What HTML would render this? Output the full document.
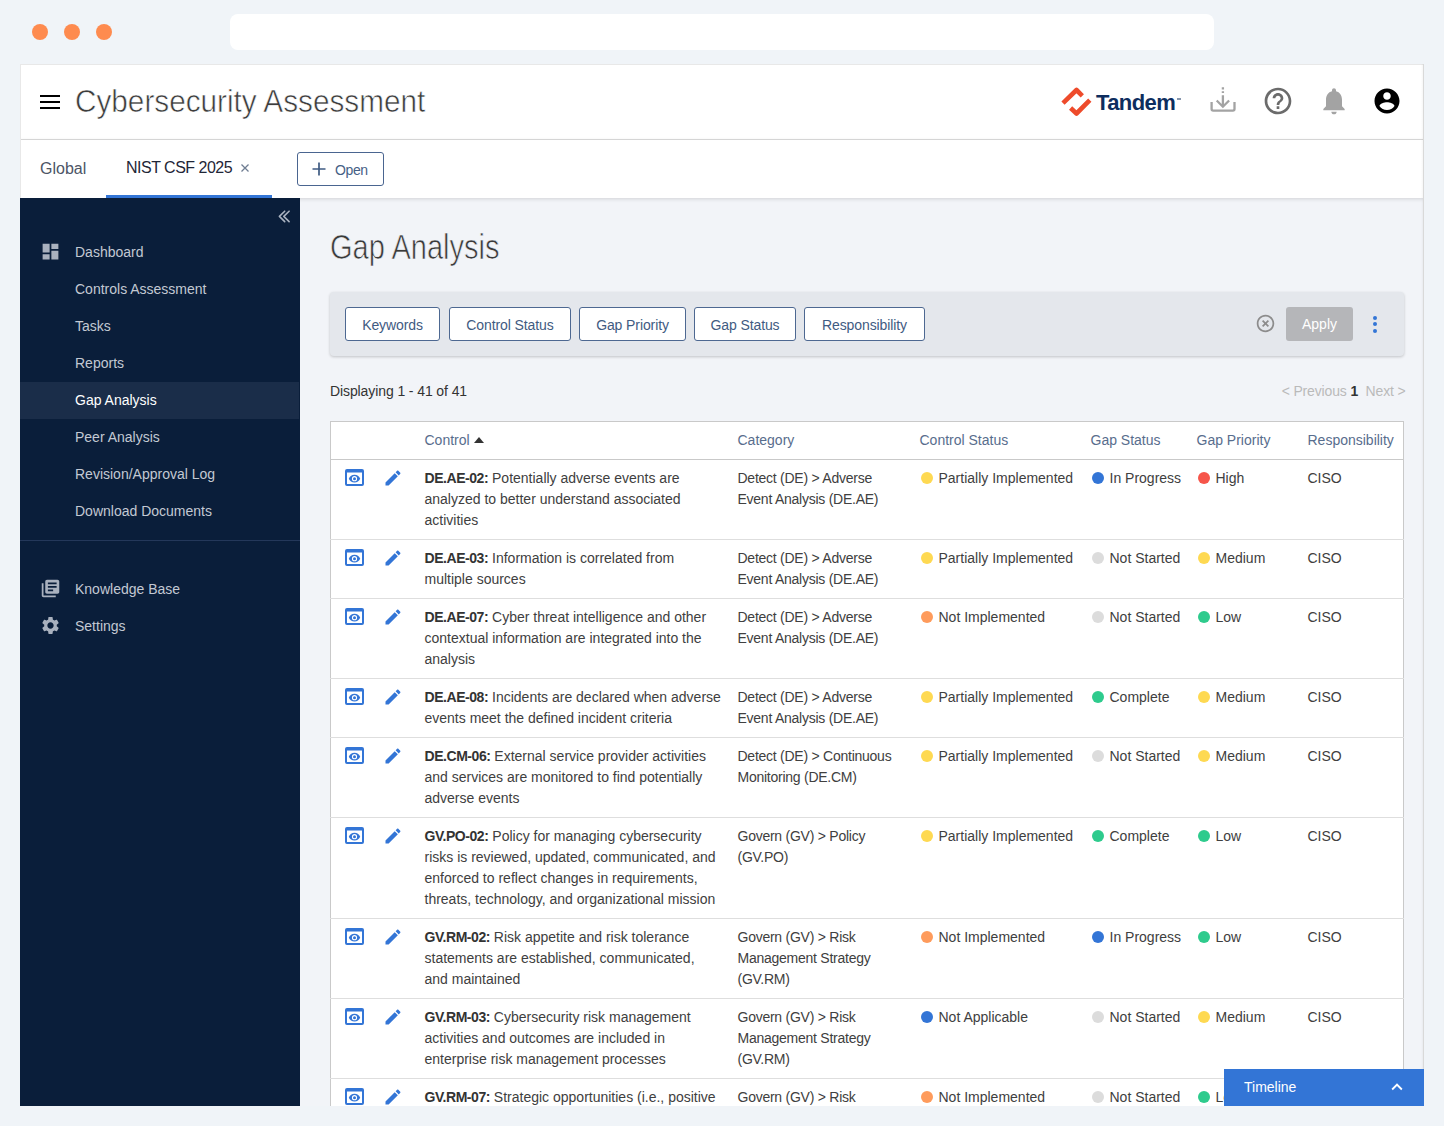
<!DOCTYPE html>
<html><head><meta charset="utf-8">
<style>
*{box-sizing:border-box;margin:0;padding:0}
html,body{width:1444px;height:1126px;overflow:hidden;background:#f0f4f8;font-family:"Liberation Sans",sans-serif;color:#333}
.abs{position:absolute}
.dot3{position:absolute;top:24px;width:16px;height:16px;border-radius:50%;background:#fe8b4f}
#url{position:absolute;left:230px;top:14px;width:984px;height:36px;border-radius:8px;background:#fff}
#win{position:absolute;left:20px;top:64px;width:1404px;height:1042px;overflow:hidden;background:#f2f4f8;}
#hdr{position:absolute;left:0;top:0;width:1404px;height:76px;background:#fff;border-bottom:1px solid #dcdcdc}
#tabs{position:absolute;left:0;top:76px;width:1404px;height:58px;background:#fff;box-shadow:0 1px 4px rgba(0,0,0,.14);z-index:2}
#side{position:absolute;left:0;top:134px;width:280px;height:908px;background:#0a1e3a;z-index:3}
#content{position:absolute;left:280px;top:134px;width:1124px;height:908px;background:#f2f4f8}
.navi{position:absolute;left:0;width:279px;height:37px;line-height:37px;font-size:14px;color:#c3c9d3;padding-left:55px}
.navi.sel{background:#1a2d49;color:#fff}
.navi svg{position:absolute;left:19.5px;top:7.4px}
table{border-collapse:collapse;table-layout:fixed;background:#fff}
.fbtn{position:absolute;top:15px;height:34px;border:1px solid #4d6891;border-radius:3px;background:#fff;color:#3f5b82;font-size:14px;line-height:34px;text-align:center;letter-spacing:-0.1px}
#filt{position:absolute;left:30px;top:94px;width:1074px;height:64px;background:#e4e7ec;border-radius:4px;box-shadow:0 1px 3px rgba(0,0,0,.2)}
#tbl{position:absolute;left:30px;top:223px;width:1074px;border:1px solid #c9c9c9;border-bottom:none}
#tbl td,#tbl th{vertical-align:top;font-size:14px;line-height:21px;padding:8px 0 8px 8px;text-align:left;font-weight:normal;color:#404040;white-space:nowrap}
#tbl td:nth-child(3) b{letter-spacing:-0.45px}
#tbl td:nth-child(4){letter-spacing:-0.25px}
#tbl th{color:#586d8d}
#tbl tr{border-bottom:1px solid #dedede}
#tbl thead tr{border-bottom:1px solid #c9c9c9}
#tbl b{color:#333}
.d{display:inline-block;width:12px;height:12px;border-radius:50%;margin:0 6px 0 1px;vertical-align:-1px}
.y{background:#fed952}.o{background:#fe9b5c}.g{background:#dcdcdc}.bl{background:#3375d6}.r{background:#f6554a}.gr{background:#2ecb8d}
.ic{position:relative;padding:0!important}

</style></head>
<body>
<div class="dot3" style="left:32px"></div>
<div class="dot3" style="left:64px"></div>
<div class="dot3" style="left:96px"></div>
<div id="url"></div>

<div id="win">
  <div id="hdr">
    <div class="abs" style="left:20px;top:31px;width:20px;height:2px;background:#000"></div><div class="abs" style="left:20px;top:37px;width:20px;height:2px;background:#000"></div><div class="abs" style="left:20px;top:43px;width:20px;height:2px;background:#000"></div>
    <div class="abs" style="left:55px;top:17.2px;font-size:32px;line-height:40px;color:#3c3c3c;-webkit-text-stroke:0.6px #fff;transform:scaleX(0.929);transform-origin:0 0">Cybersecurity Assessment</div>
    <svg class="abs" style="left:1040px;top:23px" width="32" height="30" viewBox="0 0 32 30"><path d="M3 16.2 L16.5 3 L22.3 8.8" fill="none" stroke="#ee4b2b" stroke-width="4.6" stroke-linecap="butt" stroke-linejoin="round"/><path d="M10.6 21 L16.5 26.5 L29.8 13.2" fill="none" stroke="#ee4b2b" stroke-width="4.6" stroke-linecap="butt" stroke-linejoin="round"/></svg>
    <div class="abs" style="left:1076px;top:24px;font-size:22px;line-height:30px;font-weight:bold;color:#0d2d5e;letter-spacing:-0.6px">Tandem</div>
    <div class="abs" style="left:1157px;top:34px;width:4px;height:2px;background:#8796ad"></div>
    <svg class="abs" style="left:1189px;top:22px" width="28" height="27" viewBox="0 0 28 27"><path d="M2.6 16V23Q2.6 24.6 4.2 24.6H23.9Q25.5 24.6 25.5 23V16" fill="none" stroke="#a3a3a3" stroke-width="2.3"/><path d="M13.9 1.2V3.4M13.9 5.2V7M13.9 9.2V21.2M7.7 14.5L13.9 20.7L20.1 14.5" fill="none" stroke="#a3a3a3" stroke-width="2.3"/></svg>
    <svg class="abs" style="left:1242px;top:21px" width="32" height="32" viewBox="0 0 24 24"><path d="M11 18h2v-2h-2v2zm1-16C6.48 2 2 6.48 2 12s4.48 10 10 10 10-4.48 10-10S17.52 2 12 2zm0 18c-4.41 0-8-3.59-8-8s3.59-8 8-8 8 3.59 8 8-3.59 8-8 8zm0-14c-2.21 0-4 1.79-4 4h2c0-1.1.9-2 2-2s2 .9 2 2c0 2-3 1.75-3 5h2c0-2.25 3-2.5 3-5 0-2.21-1.79-4-4-4z" fill="#6b6b6b"/></svg>
    <svg class="abs" style="left:1298px;top:21px" width="32" height="32" viewBox="0 0 24 24"><path d="M12 22c1.1 0 2-.9 2-2h-4c0 1.1.89 2 2 2zm6-6v-5c0-3.07-1.64-5.64-4.5-6.32V4c0-.83-.67-1.5-1.5-1.5s-1.5.67-1.5 1.5v.68C7.63 5.36 6 7.92 6 11v5l-2 2v1h16v-1l-2-2z" fill="#a3a3a3"/></svg>
    <svg class="abs" style="left:1352px;top:21.5px" width="30" height="30" viewBox="0 0 24 24"><path d="M12 2C6.48 2 2 6.48 2 12s4.48 10 10 10 10-4.48 10-10S17.52 2 12 2zm0 3c1.66 0 3 1.34 3 3s-1.34 3-3 3-3-1.34-3-3 1.34-3 3-3zm0 14.2c-2.5 0-4.71-1.28-6-3.22.03-1.99 4-3.08 6-3.08 1.99 0 5.97 1.09 6 3.08-1.29 1.94-3.5 3.22-6 3.22z" fill="#000"/></svg>
  </div>
  <div id="tabs">
    <div class="abs" style="left:20px;top:17px;font-size:16px;line-height:24px;color:#4d5566">Global</div>
    <div class="abs" style="left:106px;top:16px;font-size:16px;line-height:24px;color:#1f2637;letter-spacing:-0.5px">NIST CSF 2025</div>
    <div class="abs" style="left:86px;top:55px;width:166px;height:3px;background:#3375d6"></div>
    <svg class="abs" style="left:221px;top:24px" width="8" height="8" viewBox="0 0 8 8"><path d="M0.5 0.5L7.5 7.5M7.5 0.5L0.5 7.5" stroke="#6f7d92" stroke-width="1.3"/></svg>
    <div class="abs" style="left:277px;top:12px;width:87px;height:34px;border:1px solid #4a6590;border-radius:3px"></div>
    <svg class="abs" style="left:291.5px;top:22px" width="14" height="14" viewBox="0 0 14 14"><path d="M7 0.5V13.5M0.5 7H13.5" stroke="#3f5b82" stroke-width="1.7"/></svg>
    <div class="abs" style="left:315px;top:21px;font-size:14px;line-height:18px;color:#456085;letter-spacing:-0.4px">Open</div>
  </div>
  <div class="abs" style="left:0;top:0;width:1404px;height:134px;border:1px solid #e8e8e8;border-bottom:none;z-index:4"></div>
  <div class="abs" style="left:1401px;top:0;width:3px;height:1042px;border-right:1px solid #d9d9d9;z-index:6;background:linear-gradient(90deg,rgba(0,0,0,0),rgba(0,0,0,.04))"></div>
  <div id="side">
    <svg class="abs" style="left:254px;top:9px" width="20" height="20" viewBox="0 0 20 20"><path d="M10.7 4.2L5.4 9.4L10.7 14.6M15.1 4.2L9.8 9.4L15.1 14.6" fill="none" stroke="#a9b2c0" stroke-width="1.6" stroke-linecap="round" stroke-linejoin="round"/></svg>
    <div class="navi" style="top:36px"><svg width="21" height="21" viewBox="0 0 24 24"><path d="M3 13h8V3H3v10zm0 8h8v-6H3v6zm10 0h8V11h-8v10zm0-18v6h8V3h-8z" fill="#a9b1be"/></svg>Dashboard</div>
    <div class="navi" style="top:73px">Controls Assessment</div>
    <div class="navi" style="top:110px">Tasks</div>
    <div class="navi" style="top:147px">Reports</div>
    <div class="navi sel" style="top:184px">Gap Analysis</div>
    <div class="navi" style="top:221px">Peer Analysis</div>
    <div class="navi" style="top:258px">Revision/Approval Log</div>
    <div class="navi" style="top:295px">Download Documents</div>
    <div class="abs" style="left:0;top:342px;width:280px;height:1px;background:#24385a"></div>
    <div class="navi" style="top:373px"><svg width="21" height="21" viewBox="0 0 24 24"><path d="M4 6H2v14c0 1.1.9 2 2 2h14v-2H4V6zm16-4H8c-1.1 0-2 .9-2 2v12c0 1.1.9 2 2 2h12c1.1 0 2-.9 2-2V4c0-1.1-.9-2-2-2zm-1 9H9V9h10v2zm-4 4H9v-2h6v2zm4-8H9V5h10v2z" fill="#a9b1be"/></svg>Knowledge Base</div>
    <div class="navi" style="top:410px"><svg width="21" height="21" viewBox="0 0 24 24"><path d="M19.14 12.94c.04-.3.06-.61.06-.94 0-.32-.02-.64-.07-.94l2.03-1.58c.18-.14.23-.41.12-.61l-1.92-3.32c-.12-.22-.37-.29-.59-.22l-2.39.96c-.5-.38-1.03-.7-1.62-.94l-.36-2.54c-.04-.24-.24-.41-.48-.41h-3.84c-.24 0-.43.17-.47.41l-.36 2.54c-.59.24-1.13.57-1.62.94l-2.39-.96c-.22-.08-.47 0-.59.22L2.74 8.87c-.12.21-.08.47.12.61l2.03 1.58c-.05.3-.09.63-.09.94s.02.64.07.94l-2.03 1.58c-.18.14-.23.41-.12.61l1.92 3.32c.12.22.37.29.59.22l2.39-.96c.5.38 1.03.7 1.62.94l.36 2.54c.05.24.24.41.48.41h3.84c.24 0 .44-.17.47-.41l.36-2.54c.59-.24 1.13-.56 1.62-.94l2.39.96c.22.08.47 0 .59-.22l1.92-3.32c.12-.22.07-.47-.12-.61l-2.01-1.58zM12 15.6c-1.98 0-3.6-1.62-3.6-3.6s1.62-3.6 3.6-3.6 3.6 1.62 3.6 3.6-1.62 3.6-3.6 3.6z" fill="#a9b1be"/></svg>Settings</div>
  </div>
  <div id="content">
    <div class="abs" style="left:30px;top:28.9px;font-size:35px;line-height:40px;color:#3a3a3a;-webkit-text-stroke:0.7px #f2f4f8;transform:scaleX(0.83);transform-origin:0 0">Gap Analysis</div>
    <div id="filt">
      <div class="fbtn" style="left:15px;width:95px">Keywords</div>
      <div class="fbtn" style="left:119px;width:122px">Control Status</div>
      <div class="fbtn" style="left:249px;width:107px">Gap Priority</div>
      <div class="fbtn" style="left:364px;width:102px">Gap Status</div>
      <div class="fbtn" style="left:474px;width:121px">Responsibility</div>
      <svg class="abs" style="left:924.5px;top:21px" width="21" height="21" viewBox="0 0 24 24"><path d="M14.59 8L12 10.59 9.41 8 8 9.41 10.59 12 8 14.59 9.41 16 12 13.41 14.59 16 16 14.59 13.41 12 16 9.41 14.59 8zM12 2C6.47 2 2 6.47 2 12s4.47 10 10 10 10-4.47 10-10S17.53 2 12 2zm0 18c-4.41 0-8-3.59-8-8s3.59-8 8-8 8 3.59 8 8-3.59 8-8 8z" fill="#8c8c8c"/></svg>
      <div class="abs" style="left:956px;top:15px;width:67px;height:34px;border-radius:3px;background:#b5b6b9;color:#fff;font-size:14px;line-height:34px;text-align:center">Apply</div>
      <div class="abs" style="left:1043px;top:24px;width:4px;height:4px;border-radius:50%;background:#3375d6"></div>
      <div class="abs" style="left:1043px;top:30px;width:4px;height:4px;border-radius:50%;background:#3375d6"></div>
      <div class="abs" style="left:1043px;top:37px;width:4px;height:4px;border-radius:50%;background:#3375d6"></div>
    </div>
    <div class="abs" style="left:30px;top:183px;font-size:14px;line-height:21px;color:#333;letter-spacing:-0.1px">Displaying 1 - 41 of 41</div>
    <div class="abs" style="left:881.5px;top:183px;width:224px;text-align:right;font-size:14px;line-height:21px;color:#bababa;letter-spacing:-0.15px">&lt; Previous <b style="color:#333">1</b>&nbsp; Next &gt;</div>
    <table id="tbl">
      <colgroup><col style="width:46px"><col style="width:40px"><col style="width:313px"><col style="width:182px"><col style="width:171px"><col style="width:106px"><col style="width:111px"><col style="width:104px"></colgroup>
      <thead><tr><th></th><th></th><th>Control&nbsp; <svg width="10" height="6" viewBox="0 0 10 6" style="vertical-align:2px;margin-left:-3px"><path d="M0 6L5 0L10 6z" fill="#333"/></svg></th><th>Category</th><th>Control Status</th><th>Gap Status</th><th>Gap Priority</th><th>Responsibility</th></tr></thead>
      <tbody>
<tr><td class="ic"><svg class="abs" style="left:14px;top:9px" width="19" height="17" viewBox="0 0 19 17"><path fill-rule="evenodd" d="M2 0H17A2 2 0 0 1 19 2V15A2 2 0 0 1 17 17H2A2 2 0 0 1 0 15V2A2 2 0 0 1 2 0ZM2 3.4V15H17V3.4Z" fill="#3375d6"/><path d="M3.8 9.7C4.8 7.4 6.9 5.8 9.5 5.8S14.2 7.4 15.2 9.7C14.2 12 12.1 13.6 9.5 13.6S4.8 12 3.8 9.7Z" fill="#3375d6"/><circle cx="9.5" cy="9.7" r="2.6" fill="#fff"/><circle cx="9.5" cy="9.7" r="1.5" fill="#3375d6"/></svg></td><td class="ic"><svg class="abs" style="left:6px;top:7.5px" width="20" height="20" viewBox="0 0 24 24"><path d="M3 17.25V21h3.75L17.81 9.94l-3.75-3.75L3 17.25zM20.71 7.04c.39-.39.39-1.02 0-1.41l-2.34-2.34c-.39-.39-1.02-.39-1.41 0l-1.83 1.83 3.75 3.75 1.83-1.83z" fill="#3375d6"/></svg></td><td><b>DE.AE-02:</b> Potentially adverse events are<br>analyzed to better understand associated<br>activities</td><td>Detect (DE) &gt; Adverse<br>Event Analysis (DE.AE)</td><td><span class="d y"></span>Partially Implemented</td><td><span class="d bl"></span>In Progress</td><td><span class="d r"></span>High</td><td>CISO</td></tr>
<tr><td class="ic"><svg class="abs" style="left:14px;top:9px" width="19" height="17" viewBox="0 0 19 17"><path fill-rule="evenodd" d="M2 0H17A2 2 0 0 1 19 2V15A2 2 0 0 1 17 17H2A2 2 0 0 1 0 15V2A2 2 0 0 1 2 0ZM2 3.4V15H17V3.4Z" fill="#3375d6"/><path d="M3.8 9.7C4.8 7.4 6.9 5.8 9.5 5.8S14.2 7.4 15.2 9.7C14.2 12 12.1 13.6 9.5 13.6S4.8 12 3.8 9.7Z" fill="#3375d6"/><circle cx="9.5" cy="9.7" r="2.6" fill="#fff"/><circle cx="9.5" cy="9.7" r="1.5" fill="#3375d6"/></svg></td><td class="ic"><svg class="abs" style="left:6px;top:7.5px" width="20" height="20" viewBox="0 0 24 24"><path d="M3 17.25V21h3.75L17.81 9.94l-3.75-3.75L3 17.25zM20.71 7.04c.39-.39.39-1.02 0-1.41l-2.34-2.34c-.39-.39-1.02-.39-1.41 0l-1.83 1.83 3.75 3.75 1.83-1.83z" fill="#3375d6"/></svg></td><td><b>DE.AE-03:</b> Information is correlated from<br>multiple sources</td><td>Detect (DE) &gt; Adverse<br>Event Analysis (DE.AE)</td><td><span class="d y"></span>Partially Implemented</td><td><span class="d g"></span>Not Started</td><td><span class="d y"></span>Medium</td><td>CISO</td></tr>
<tr><td class="ic"><svg class="abs" style="left:14px;top:9px" width="19" height="17" viewBox="0 0 19 17"><path fill-rule="evenodd" d="M2 0H17A2 2 0 0 1 19 2V15A2 2 0 0 1 17 17H2A2 2 0 0 1 0 15V2A2 2 0 0 1 2 0ZM2 3.4V15H17V3.4Z" fill="#3375d6"/><path d="M3.8 9.7C4.8 7.4 6.9 5.8 9.5 5.8S14.2 7.4 15.2 9.7C14.2 12 12.1 13.6 9.5 13.6S4.8 12 3.8 9.7Z" fill="#3375d6"/><circle cx="9.5" cy="9.7" r="2.6" fill="#fff"/><circle cx="9.5" cy="9.7" r="1.5" fill="#3375d6"/></svg></td><td class="ic"><svg class="abs" style="left:6px;top:7.5px" width="20" height="20" viewBox="0 0 24 24"><path d="M3 17.25V21h3.75L17.81 9.94l-3.75-3.75L3 17.25zM20.71 7.04c.39-.39.39-1.02 0-1.41l-2.34-2.34c-.39-.39-1.02-.39-1.41 0l-1.83 1.83 3.75 3.75 1.83-1.83z" fill="#3375d6"/></svg></td><td><b>DE.AE-07:</b> Cyber threat intelligence and other<br>contextual information are integrated into the<br>analysis</td><td>Detect (DE) &gt; Adverse<br>Event Analysis (DE.AE)</td><td><span class="d o"></span>Not Implemented</td><td><span class="d g"></span>Not Started</td><td><span class="d gr"></span>Low</td><td>CISO</td></tr>
<tr><td class="ic"><svg class="abs" style="left:14px;top:9px" width="19" height="17" viewBox="0 0 19 17"><path fill-rule="evenodd" d="M2 0H17A2 2 0 0 1 19 2V15A2 2 0 0 1 17 17H2A2 2 0 0 1 0 15V2A2 2 0 0 1 2 0ZM2 3.4V15H17V3.4Z" fill="#3375d6"/><path d="M3.8 9.7C4.8 7.4 6.9 5.8 9.5 5.8S14.2 7.4 15.2 9.7C14.2 12 12.1 13.6 9.5 13.6S4.8 12 3.8 9.7Z" fill="#3375d6"/><circle cx="9.5" cy="9.7" r="2.6" fill="#fff"/><circle cx="9.5" cy="9.7" r="1.5" fill="#3375d6"/></svg></td><td class="ic"><svg class="abs" style="left:6px;top:7.5px" width="20" height="20" viewBox="0 0 24 24"><path d="M3 17.25V21h3.75L17.81 9.94l-3.75-3.75L3 17.25zM20.71 7.04c.39-.39.39-1.02 0-1.41l-2.34-2.34c-.39-.39-1.02-.39-1.41 0l-1.83 1.83 3.75 3.75 1.83-1.83z" fill="#3375d6"/></svg></td><td><b>DE.AE-08:</b> Incidents are declared when adverse<br>events meet the defined incident criteria</td><td>Detect (DE) &gt; Adverse<br>Event Analysis (DE.AE)</td><td><span class="d y"></span>Partially Implemented</td><td><span class="d gr"></span>Complete</td><td><span class="d y"></span>Medium</td><td>CISO</td></tr>
<tr><td class="ic"><svg class="abs" style="left:14px;top:9px" width="19" height="17" viewBox="0 0 19 17"><path fill-rule="evenodd" d="M2 0H17A2 2 0 0 1 19 2V15A2 2 0 0 1 17 17H2A2 2 0 0 1 0 15V2A2 2 0 0 1 2 0ZM2 3.4V15H17V3.4Z" fill="#3375d6"/><path d="M3.8 9.7C4.8 7.4 6.9 5.8 9.5 5.8S14.2 7.4 15.2 9.7C14.2 12 12.1 13.6 9.5 13.6S4.8 12 3.8 9.7Z" fill="#3375d6"/><circle cx="9.5" cy="9.7" r="2.6" fill="#fff"/><circle cx="9.5" cy="9.7" r="1.5" fill="#3375d6"/></svg></td><td class="ic"><svg class="abs" style="left:6px;top:7.5px" width="20" height="20" viewBox="0 0 24 24"><path d="M3 17.25V21h3.75L17.81 9.94l-3.75-3.75L3 17.25zM20.71 7.04c.39-.39.39-1.02 0-1.41l-2.34-2.34c-.39-.39-1.02-.39-1.41 0l-1.83 1.83 3.75 3.75 1.83-1.83z" fill="#3375d6"/></svg></td><td><b>DE.CM-06:</b> External service provider activities<br>and services are monitored to find potentially<br>adverse events</td><td>Detect (DE) &gt; Continuous<br>Monitoring (DE.CM)</td><td><span class="d y"></span>Partially Implemented</td><td><span class="d g"></span>Not Started</td><td><span class="d y"></span>Medium</td><td>CISO</td></tr>
<tr><td class="ic"><svg class="abs" style="left:14px;top:9px" width="19" height="17" viewBox="0 0 19 17"><path fill-rule="evenodd" d="M2 0H17A2 2 0 0 1 19 2V15A2 2 0 0 1 17 17H2A2 2 0 0 1 0 15V2A2 2 0 0 1 2 0ZM2 3.4V15H17V3.4Z" fill="#3375d6"/><path d="M3.8 9.7C4.8 7.4 6.9 5.8 9.5 5.8S14.2 7.4 15.2 9.7C14.2 12 12.1 13.6 9.5 13.6S4.8 12 3.8 9.7Z" fill="#3375d6"/><circle cx="9.5" cy="9.7" r="2.6" fill="#fff"/><circle cx="9.5" cy="9.7" r="1.5" fill="#3375d6"/></svg></td><td class="ic"><svg class="abs" style="left:6px;top:7.5px" width="20" height="20" viewBox="0 0 24 24"><path d="M3 17.25V21h3.75L17.81 9.94l-3.75-3.75L3 17.25zM20.71 7.04c.39-.39.39-1.02 0-1.41l-2.34-2.34c-.39-.39-1.02-.39-1.41 0l-1.83 1.83 3.75 3.75 1.83-1.83z" fill="#3375d6"/></svg></td><td><b>GV.PO-02:</b> Policy for managing cybersecurity<br>risks is reviewed, updated, communicated, and<br>enforced to reflect changes in requirements,<br>threats, technology, and organizational mission</td><td>Govern (GV) &gt; Policy<br>(GV.PO)</td><td><span class="d y"></span>Partially Implemented</td><td><span class="d gr"></span>Complete</td><td><span class="d gr"></span>Low</td><td>CISO</td></tr>
<tr><td class="ic"><svg class="abs" style="left:14px;top:9px" width="19" height="17" viewBox="0 0 19 17"><path fill-rule="evenodd" d="M2 0H17A2 2 0 0 1 19 2V15A2 2 0 0 1 17 17H2A2 2 0 0 1 0 15V2A2 2 0 0 1 2 0ZM2 3.4V15H17V3.4Z" fill="#3375d6"/><path d="M3.8 9.7C4.8 7.4 6.9 5.8 9.5 5.8S14.2 7.4 15.2 9.7C14.2 12 12.1 13.6 9.5 13.6S4.8 12 3.8 9.7Z" fill="#3375d6"/><circle cx="9.5" cy="9.7" r="2.6" fill="#fff"/><circle cx="9.5" cy="9.7" r="1.5" fill="#3375d6"/></svg></td><td class="ic"><svg class="abs" style="left:6px;top:7.5px" width="20" height="20" viewBox="0 0 24 24"><path d="M3 17.25V21h3.75L17.81 9.94l-3.75-3.75L3 17.25zM20.71 7.04c.39-.39.39-1.02 0-1.41l-2.34-2.34c-.39-.39-1.02-.39-1.41 0l-1.83 1.83 3.75 3.75 1.83-1.83z" fill="#3375d6"/></svg></td><td><b>GV.RM-02:</b> Risk appetite and risk tolerance<br>statements are established, communicated,<br>and maintained</td><td>Govern (GV) &gt; Risk<br>Management Strategy<br>(GV.RM)</td><td><span class="d o"></span>Not Implemented</td><td><span class="d bl"></span>In Progress</td><td><span class="d gr"></span>Low</td><td>CISO</td></tr>
<tr><td class="ic"><svg class="abs" style="left:14px;top:9px" width="19" height="17" viewBox="0 0 19 17"><path fill-rule="evenodd" d="M2 0H17A2 2 0 0 1 19 2V15A2 2 0 0 1 17 17H2A2 2 0 0 1 0 15V2A2 2 0 0 1 2 0ZM2 3.4V15H17V3.4Z" fill="#3375d6"/><path d="M3.8 9.7C4.8 7.4 6.9 5.8 9.5 5.8S14.2 7.4 15.2 9.7C14.2 12 12.1 13.6 9.5 13.6S4.8 12 3.8 9.7Z" fill="#3375d6"/><circle cx="9.5" cy="9.7" r="2.6" fill="#fff"/><circle cx="9.5" cy="9.7" r="1.5" fill="#3375d6"/></svg></td><td class="ic"><svg class="abs" style="left:6px;top:7.5px" width="20" height="20" viewBox="0 0 24 24"><path d="M3 17.25V21h3.75L17.81 9.94l-3.75-3.75L3 17.25zM20.71 7.04c.39-.39.39-1.02 0-1.41l-2.34-2.34c-.39-.39-1.02-.39-1.41 0l-1.83 1.83 3.75 3.75 1.83-1.83z" fill="#3375d6"/></svg></td><td><b>GV.RM-03:</b> Cybersecurity risk management<br>activities and outcomes are included in<br>enterprise risk management processes</td><td>Govern (GV) &gt; Risk<br>Management Strategy<br>(GV.RM)</td><td><span class="d bl"></span>Not Applicable</td><td><span class="d g"></span>Not Started</td><td><span class="d y"></span>Medium</td><td>CISO</td></tr>
<tr><td class="ic"><svg class="abs" style="left:14px;top:9px" width="19" height="17" viewBox="0 0 19 17"><path fill-rule="evenodd" d="M2 0H17A2 2 0 0 1 19 2V15A2 2 0 0 1 17 17H2A2 2 0 0 1 0 15V2A2 2 0 0 1 2 0ZM2 3.4V15H17V3.4Z" fill="#3375d6"/><path d="M3.8 9.7C4.8 7.4 6.9 5.8 9.5 5.8S14.2 7.4 15.2 9.7C14.2 12 12.1 13.6 9.5 13.6S4.8 12 3.8 9.7Z" fill="#3375d6"/><circle cx="9.5" cy="9.7" r="2.6" fill="#fff"/><circle cx="9.5" cy="9.7" r="1.5" fill="#3375d6"/></svg></td><td class="ic"><svg class="abs" style="left:6px;top:7.5px" width="20" height="20" viewBox="0 0 24 24"><path d="M3 17.25V21h3.75L17.81 9.94l-3.75-3.75L3 17.25zM20.71 7.04c.39-.39.39-1.02 0-1.41l-2.34-2.34c-.39-.39-1.02-.39-1.41 0l-1.83 1.83 3.75 3.75 1.83-1.83z" fill="#3375d6"/></svg></td><td><b>GV.RM-07:</b> Strategic opportunities (i.e., positive<br>risks) are characterized and are included in<br>organizational cybersecurity risk assessments</td><td>Govern (GV) &gt; Risk<br>Management Strategy<br>(GV.RM)</td><td><span class="d o"></span>Not Implemented</td><td><span class="d g"></span>Not Started</td><td><span class="d gr"></span>Low</td><td>CISO</td></tr>
      </tbody>
    </table>
    <div class="abs" style="left:924px;top:871px;width:200px;height:37px;background:#3375d6;z-index:7">
      <div class="abs" style="left:20px;top:8px;font-size:14px;line-height:21px;color:#fff">Timeline</div>
      <svg class="abs" style="left:162px;top:7px" width="22" height="22" viewBox="0 0 24 24"><path d="M7.41 15.41L12 10.83l4.59 4.58L18 14l-6-6-6 6z" fill="#fff"/></svg>
    </div>
  </div>
</div>
</body></html>
